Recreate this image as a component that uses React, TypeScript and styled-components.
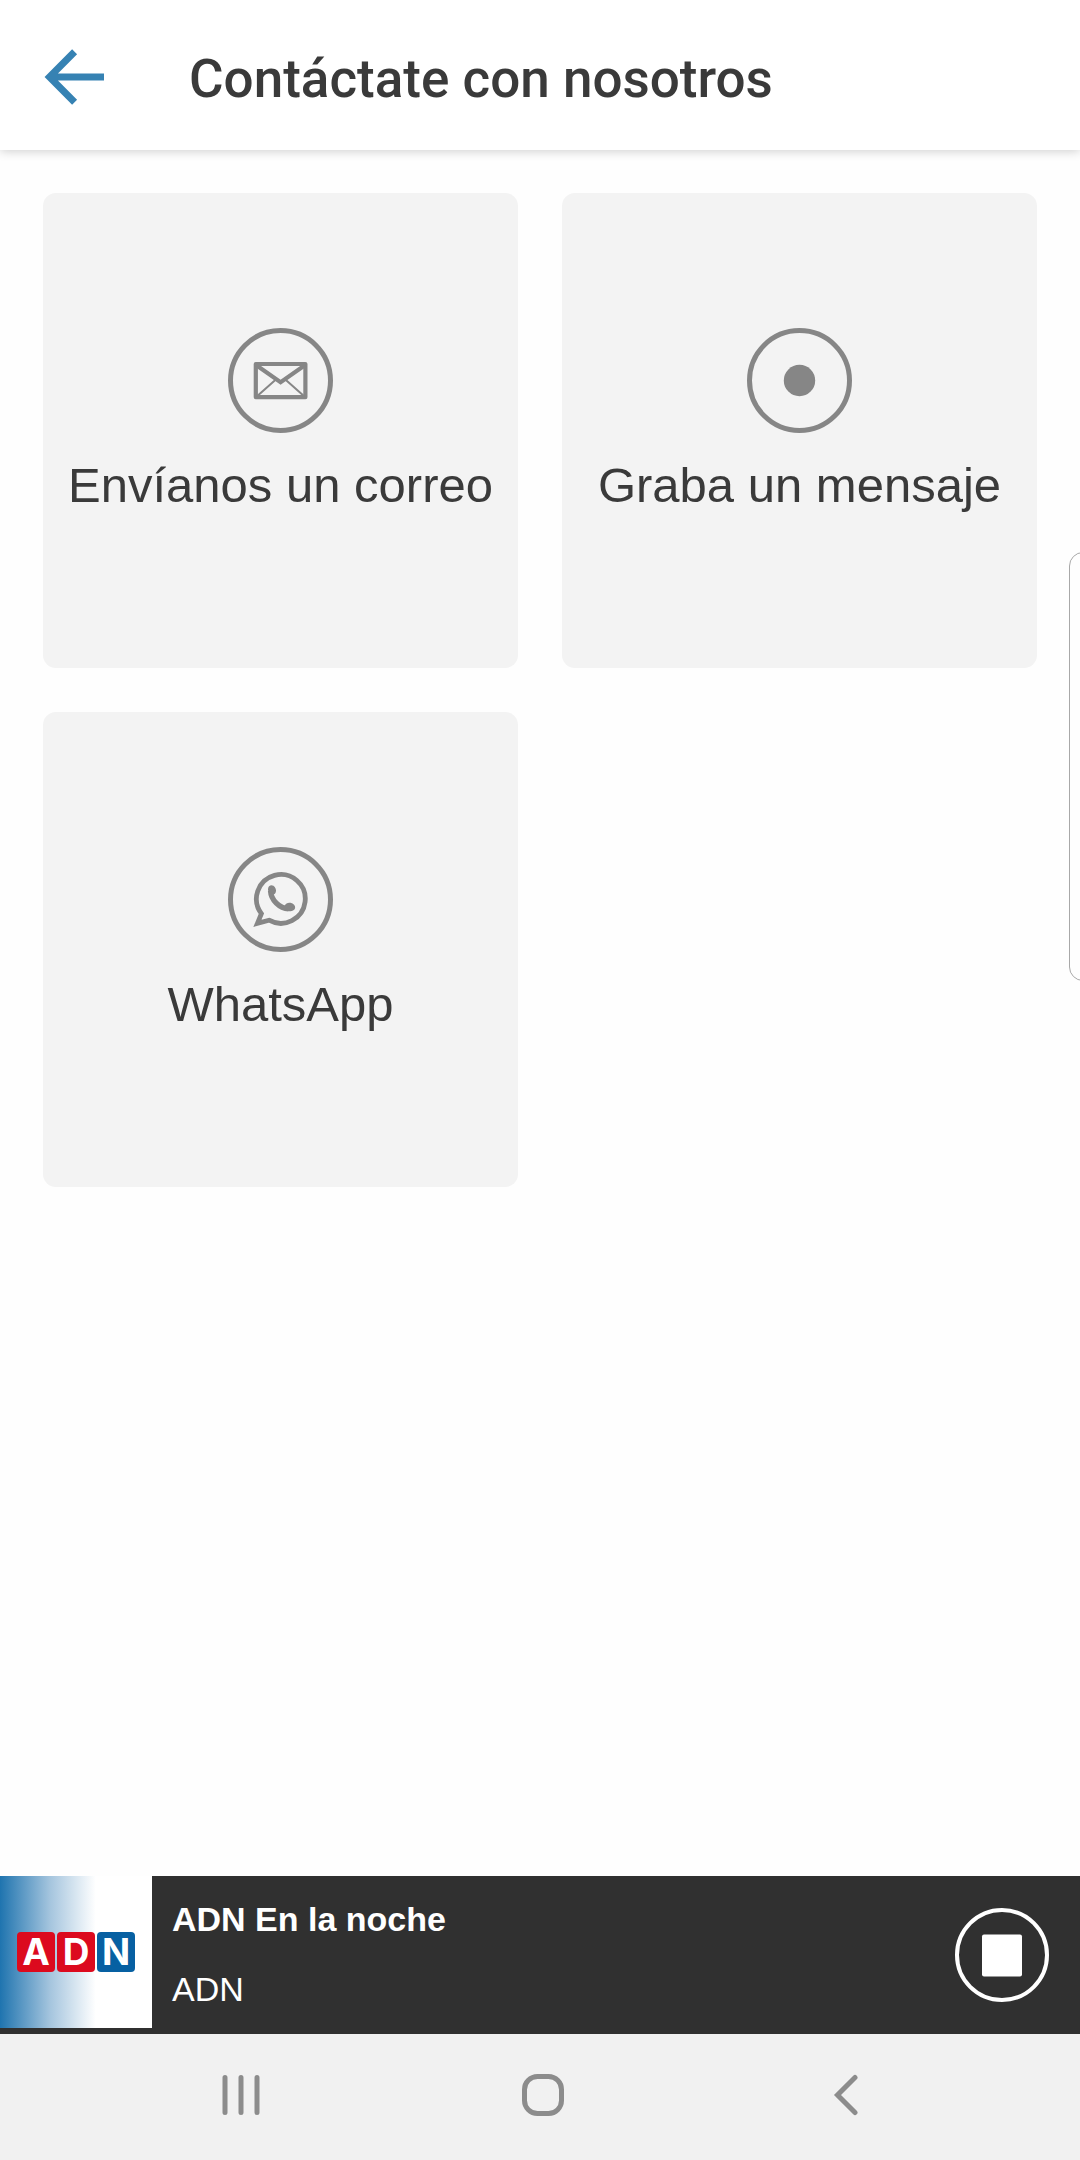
import React from "react";
import styled, {createGlobalStyle} from "styled-components";

const GlobalStyle = createGlobalStyle`
  * {
    box-sizing: border-box;
  }

  body {
    margin: 0;
    background: #fefefe;
    color: #3a3a3a;
    font-family: "Liberation Sans", Arial, sans-serif;
  }

  button {
    padding: 0;
    border: none;
    background: transparent;
    color: inherit;
    font: inherit;
    cursor: pointer;
  }

  svg {
    display: block;
  }
`

const Page = styled.div`
  position: relative;
  display: flex;
  flex-direction: column;
  min-height: 100vh;
  overflow: hidden;
`

const Header = styled.header`
  display: flex;
  align-items: center;
  column-gap: 85px;
  min-height: 150px;
  padding: 8px 44px 0;
  background: #fff;
  box-shadow: 0 1px 10px rgba(0, 0, 0, 0.2);
`

const Title = styled.h1`
  margin: 0;
  font-family: Roboto, sans-serif;
  font-size: 53px;
  font-weight: 500;
  line-height: 62px;
`

const Main = styled.main`
  flex: 1;
  padding: 43px;
`

const CardGrid = styled.div`
  display: grid;
  grid-template-columns: 1fr 1fr;
  gap: 44px;
`

const Card = styled.button`
  display: flex;
  flex-direction: column;
  align-items: center;
  justify-content: center;
  row-gap: 22px;
  aspect-ratio: 1;
  padding-bottom: 18px;
  border-radius: 13px;
  background: #f3f3f3;
`

const CardLabel = styled.span`
  font-size: 49px;
  line-height: 60px;
  white-space: nowrap;
`

const EdgeHandle = styled.div`
  position: absolute;
  top: 552px;
  right: -20px;
  width: 31px;
  height: 429px;
  border: 1px solid #a8a8a8;
  border-radius: 14px;
`

const Player = styled.section`
  display: flex;
  align-items: center;
  min-height: 158px;
  padding-right: 31px;
  background: #303030;
  color: #fff;
`

const Cover = styled.div`
  display: flex;
  align-items: center;
  align-self: flex-start;
  justify-content: center;
  column-gap: 2px;
  width: 152px;
  height: 152px;
  background: linear-gradient(90deg, #1f74af 0%, #a5c5de 33%, #fff 63%);
`

const Tile = styled.span<{$color: string}>`
  width: 38px;
  height: 40px;
  border-radius: 4px;
  background: ${({$color}) => $color};
  font-family: Inter, sans-serif;
  font-size: 37px;
  font-weight: 700;
  line-height: 40px;
  text-align: center;
`

const TrackInfo = styled.div`
  display: flex;
  flex: 1;
  flex-direction: column;
  row-gap: 30px;
  padding: 0 0 2px 20px;
  font-size: 34px;
  line-height: 40px;
`

const NavBar = styled.nav`
  display: grid;
  grid-template-columns: repeat(3, 1fr);
  align-items: center;
  min-height: 126px;
  padding: 0 83px 4px 90px;
  background: #f1f1f1;
`

const NavButton = styled.button`
  display: flex;
  justify-content: center;
`

const RoundIcon = ({children}: {children: React.ReactNode}) => (
    <svg width="105" height="105" viewBox="0 0 105 105" fill="none" stroke="#868686">
        <circle cx="52.5" cy="52.5" r="50" strokeWidth="5"/>
        {children}
    </svg>
)

const MailIcon = () => (
    <RoundIcon>
        <rect x="27.8" y="36" width="49.6" height="33.2" strokeWidth="4.2" strokeLinejoin="round"/>
        <path d="M28 37 52.6 54.2 77.2 37" strokeWidth="4"/>
        <path d="M29 68.2 47.6 51.8M76.2 68.2 57.6 51.8" strokeWidth="2"/>
    </RoundIcon>
)

const RecordIcon = () => (
    <RoundIcon>
        <circle cx="52.5" cy="52.5" r="15.7" fill="#868686" stroke="none"/>
    </RoundIcon>
)

const WhatsAppIcon = () => (
    <RoundIcon>
        <path d="M33.4 66.6A24.4 24.4 0 1 1 41 73.2L29.4 76.4Z" strokeWidth="4.8"/>
        <path d="M42.6 44C43 53 51.5 61.6 60.5 61.8" strokeWidth="5.4"/>
        <g fill="#868686" stroke="none">
            <ellipse cx="44" cy="43" rx="3.9" ry="4.9" transform="rotate(-20 44 43)"/>
            <ellipse cx="61.8" cy="60" rx="5.4" ry="4.2" transform="rotate(10 61.8 60)"/>
        </g>
    </RoundIcon>
)

const options = [
    {label: 'Envíanos un correo', Icon: MailIcon},
    {label: 'Graba un mensaje', Icon: RecordIcon},
    {label: 'WhatsApp', Icon: WhatsAppIcon},
]

const App = () => {
    return (
        <Page>
            <GlobalStyle/>
            <Header>
                <button type="button" aria-label="Volver">
                    <svg width="60" height="60" viewBox="0 0 60 60" fill="none" stroke="#3682b3" strokeWidth="7">
                        <path d="M30.6 2.8 5.5 28 30.6 53.2M6 28H60"/>
                    </svg>
                </button>
                <Title>Contáctate con nosotros</Title>
            </Header>
            <Main>
                <CardGrid>
                    {options.map(({label, Icon}) => (
                        <Card key={label} type="button">
                            <Icon/>
                            <CardLabel>{label}</CardLabel>
                        </Card>
                    ))}
                </CardGrid>
            </Main>
            <EdgeHandle/>
            <Player>
                <Cover>
                    <Tile $color="#dc0a1e">A</Tile>
                    <Tile $color="#dc0a1e">D</Tile>
                    <Tile $color="#0760a2">N</Tile>
                </Cover>
                <TrackInfo>
                    <strong>ADN En la noche</strong>
                    <span>ADN</span>
                </TrackInfo>
                <button type="button" aria-label="Detener">
                    <svg width="94" height="94" viewBox="0 0 94 94">
                        <circle cx="47" cy="47" r="45" fill="none" stroke="#fff" strokeWidth="4"/>
                        <rect x="27" y="26.5" width="40" height="42" rx="2" fill="#fff"/>
                    </svg>
                </button>
            </Player>
            <NavBar>
                <NavButton type="button" aria-label="Recientes">
                    <svg width="42" height="42" viewBox="0 0 42 42" stroke="#8c8c8c" strokeWidth="5" strokeLinecap="round">
                        <path d="M5 3.5V38.5M21 3.5V38.5M37 3.5V38.5"/>
                    </svg>
                </NavButton>
                <NavButton type="button" aria-label="Inicio">
                    <svg width="42" height="42" viewBox="0 0 42 42" fill="none" stroke="#8c8c8c" strokeWidth="5">
                        <rect x="2.5" y="2.5" width="37" height="37" rx="13"/>
                    </svg>
                </NavButton>
                <NavButton type="button" aria-label="Atrás">
                    <svg width="42" height="42" viewBox="0 0 42 42" fill="none" stroke="#8c8c8c" strokeWidth="5" strokeLinecap="round">
                        <path d="M30 3.5 12.5 21 30 38.5"/>
                    </svg>
                </NavButton>
            </NavBar>
        </Page>
    )
}

export default App
